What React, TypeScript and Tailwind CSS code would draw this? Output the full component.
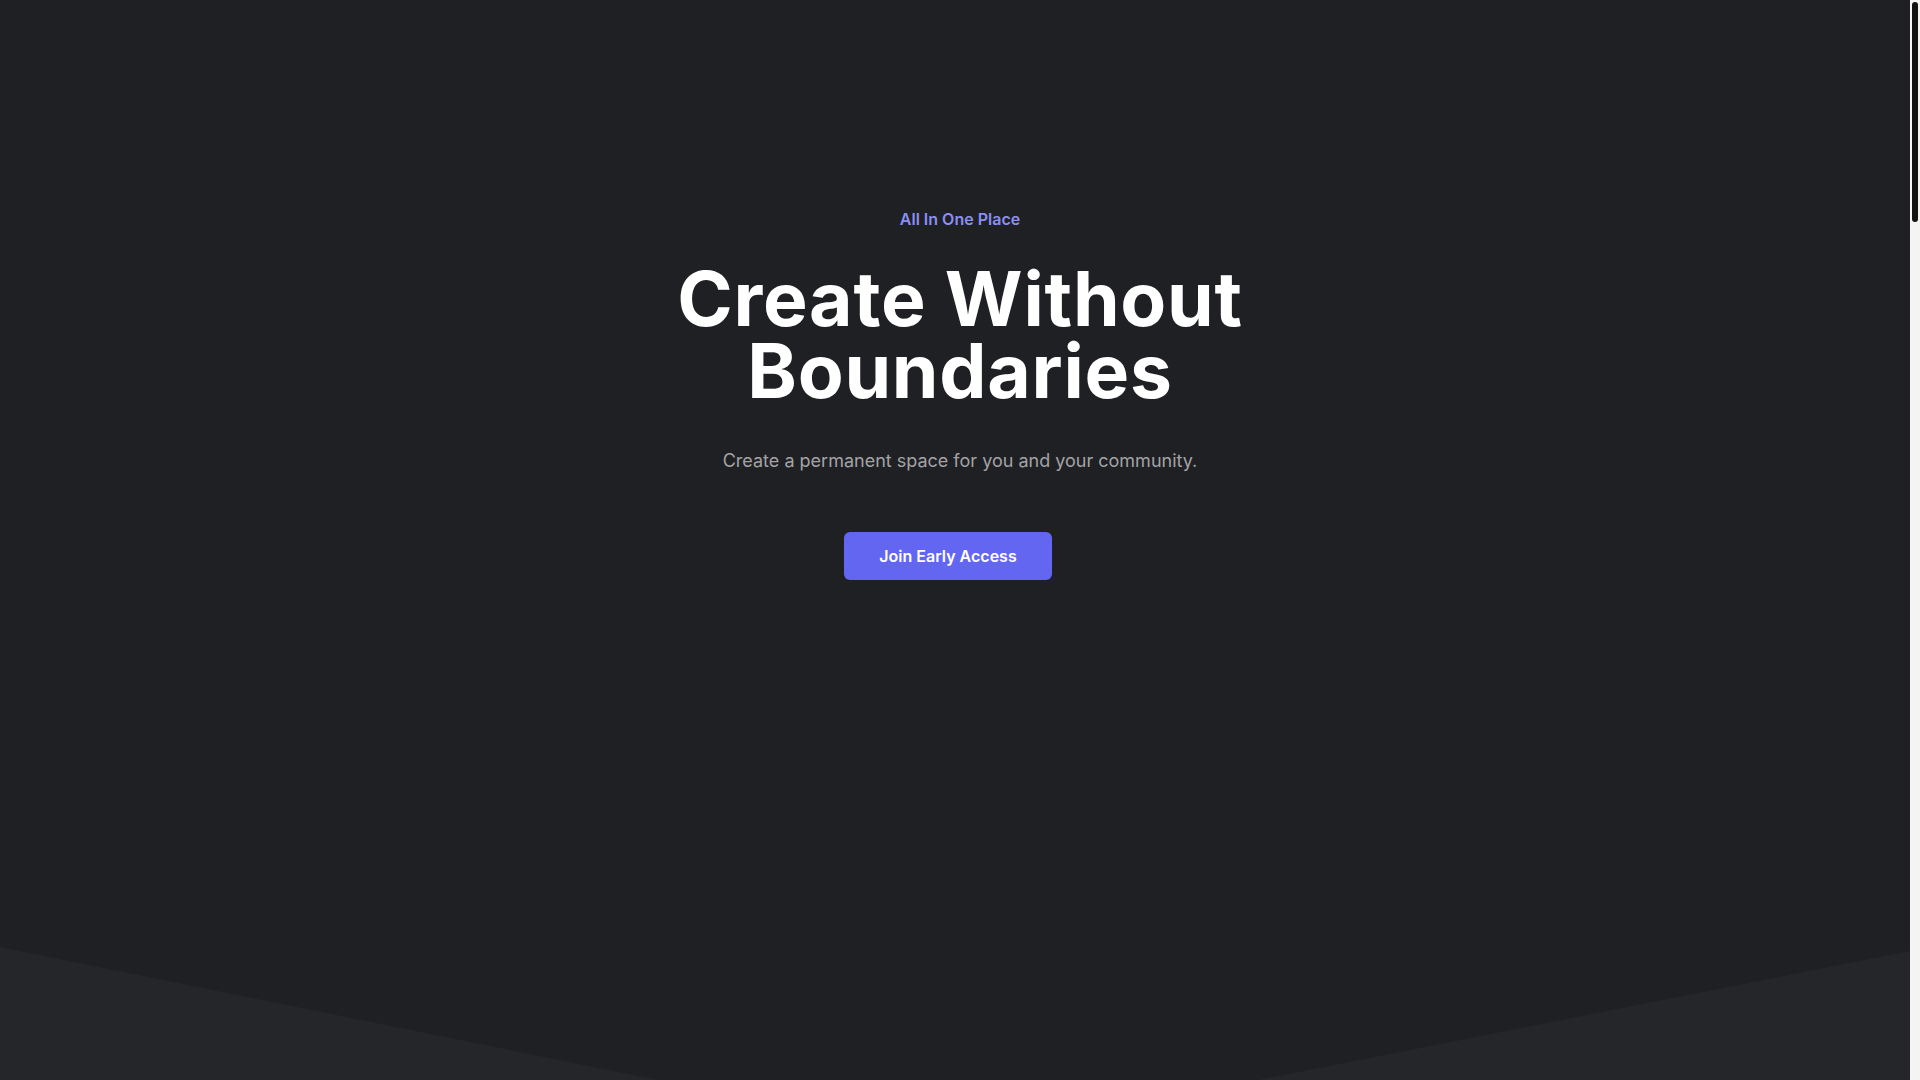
export default function App() {
  return (
    <div className="flex h-screen w-full overflow-hidden bg-[#1f2023] font-['Inter','Noto_Sans',sans-serif]">
      <main className="flex-1 overflow-hidden">
        {/* hero */}
        <section className="flex h-[947px] flex-col items-center pl-[10px] pt-[207px]">
          <p className="text-base leading-6 font-semibold text-[#8b8ef2]">All In One Place</p>
          <h1 className="mt-[32px] text-center text-[75px] leading-[72px] font-bold tracking-[0.01em] text-white">
            Create Without
            <br />
            Boundaries
          </h1>
          <p className="mt-[40px] text-lg leading-7 text-[#a3a3a6]">
            Create a permanent space for you and your community.
          </p>
          <button className="mt-[57px] mr-[24px] h-12 w-[208px] rounded-md bg-[#6366f1] text-base font-semibold text-white">
            Join Early Access
          </button>
        </section>

        {/* next section, V-shaped divider */}
        <section className="h-[4350px] bg-[#25262a]">
          <svg
            className="block h-[193px] w-full"
            viewBox="0 0 1910 193"
            preserveAspectRatio="none"
          >
            <polygon points="0,0 1910,0 1910,4 955,193 0,0" fill="#1f2023" />
          </svg>
        </section>
      </main>

      {/* scrollbar */}
      <aside className="w-[10px] shrink-0 bg-[#f4f4f4] px-[2px] pt-[2px]">
        <div className="h-[220px] w-full rounded-full bg-[#121213]" />
      </aside>
    </div>
  );
}
